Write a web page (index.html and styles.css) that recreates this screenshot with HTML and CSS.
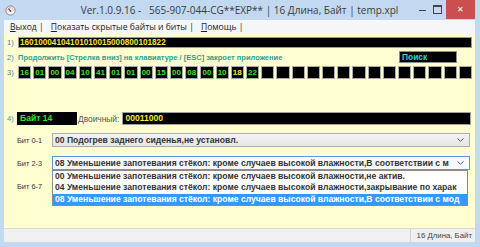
FILE: index.html
```html
<!DOCTYPE html>
<html lang="ru">
<head>
  <meta charset="UTF-8"/>
  <title>Ver.1.0.9.16 - 565-907-044-CG**EXP** | 16 Длина, Байт | temp.xpl</title>
  <link rel="stylesheet" href="styles.css">
</head>
<body>
  <div class="window">
    <div class="titlebar">
      <div class="app-icon">
        <svg width="11" height="11" viewBox="0 0 11 11">
          <circle cx="5.5" cy="5.5" r="4.6" fill="#f4f4f4" stroke="#8a8a8a" stroke-width="1"/>
          <path d="M2.6 5.5 A2.9 2.9 0 0 1 8.4 5.5" fill="none" stroke="#b0b0b0" stroke-width="0.8"/>
          <line x1="5.5" y1="6" x2="3.4" y2="3.4" stroke="#d33" stroke-width="1.2"/>
          <circle cx="5.5" cy="6" r="0.9" fill="#555"/>
        </svg>
      </div>
      <div class="title">Ver.1.0.9.16 -&nbsp;&nbsp;&nbsp;565-907-044-CG**EXP** | 16 Длина, Байт | temp.xpl</div>
      <div class="controls">
        <span class="btn-min"></span>
        <span class="btn-max"></span>
        <span class="btn-close">✕</span>
      </div>
    </div>

    <div class="menubar">
      <span class="menu-item"><u>В</u>ыход |</span>
      <span class="menu-item"><u>П</u>оказать скрытые байты и биты |</span>
      <span class="menu-item"><u>П</u>омощь |</span>
    </div>

    <div class="client">
      <!-- 1) строка байтов -->
      <div class="row row-hex">
        <span class="num">1)</span>
        <div class="hex-line">16010004104101010015000800101822</div>
      </div>

      <!-- 2) подсказка и поиск -->
      <div class="row row-hint">
        <span class="num">2)</span>
        <span class="hint">Продолжить [Стрелка вниз] на клавиатуре / [ESC] закроет приложение</span>
        <div class="search">Поиск</div>
      </div>

      <!-- 3) байты по ячейкам -->
      <div class="row row-bytes">
        <span class="num">3)</span>
        <div class="bytes">
          <span class="byte">16</span><span class="byte">01</span><span class="byte">00</span><span class="byte">04</span>
          <span class="byte">10</span><span class="byte">41</span><span class="byte">01</span><span class="byte">01</span>
          <span class="byte">00</span><span class="byte">15</span><span class="byte">00</span><span class="byte">08</span>
          <span class="byte">00</span><span class="byte">10</span><span class="byte active">18</span><span class="byte">22</span>
          <span class="byte"></span><span class="byte"></span><span class="byte"></span><span class="byte"></span>
          <span class="byte"></span><span class="byte"></span><span class="byte"></span><span class="byte"></span>
          <span class="byte"></span><span class="byte"></span><span class="byte"></span><span class="byte"></span>
          <span class="byte"></span><span class="byte"></span>
        </div>
      </div>

      <!-- 4) выбранный байт -->
      <div class="row row-byte">
        <span class="num num-teal">4)</span>
        <div class="byte-name">Байт 14</div>
        <span class="bin-label">Двоичный:</span>
        <div class="bin-value">00011000</div>
      </div>

      <div class="bit-row">
        <span class="bit-label">Бит 0-1</span>
        <div class="combo">
          <span class="combo-text">00 Подогрев заднего сиденья,не установл.</span>
          <svg class="chevron" width="7" height="4" viewBox="0 0 7 4"><path d="M0.5 0.5 L3.5 3.3 L6.5 0.5" fill="none" stroke="#555" stroke-width="1"/></svg>
        </div>
      </div>

      <div class="bit-row">
        <span class="bit-label">Бит 2-3</span>
        <div class="combo combo-open">
          <span class="combo-text">08 Уменьшение запотевания стёкол: кроме случаев высокой влажности,В соответствии с м</span>
          <svg class="chevron" width="7" height="4" viewBox="0 0 7 4"><path d="M0.5 0.5 L3.5 3.3 L6.5 0.5" fill="none" stroke="#555" stroke-width="1"/></svg>
          <ul class="dropdown">
            <li>00 Уменьшение запотевания стёкол: кроме случаев высокой влажности,не актив.</li>
            <li>04 Уменьшение запотевания стёкол: кроме случаев высокой влажности,закрывание по харак</li>
            <li class="selected">08 Уменьшение запотевания стёкол: кроме случаев высокой влажности,В соответствии с мод</li>
          </ul>
        </div>
      </div>

      <div class="bit-row">
        <span class="bit-label">Бит 6-7</span>
      </div>
    </div>

    <div class="statusbar">
      <span class="status-cell">16 Длина, Байт</span>
    </div>
  </div>
</body>
</html>
```

FILE: styles.css
```css
* { box-sizing: border-box; }
body { margin: 0; width: 480px; height: 247px; overflow: hidden; font-family: 'Liberation Sans', Arial, sans-serif; background-color: #c3d9f1; }

.window {
  height: 247px;
  display: flex;
  flex-direction: column;
  padding: 0 5px 5px 4px;
  background-color: #c3d9f1;
}

/* заголовок окна */
.titlebar {
  height: 20px;
  display: grid;
  grid-template-columns: 60px 1fr 60px;
  align-items: center;
}
.app-icon { display: flex; padding-left: 1px; padding-top: 1px; }
.title {
  text-align: center;
  font-family: 'Open Sans', sans-serif;
  font-size: 10px;
  color: #3a3a3a;
  white-space: nowrap;
}
.controls { display: flex; justify-content: flex-end; align-items: flex-start; height: 20px; }
.btn-min { width: 14px; height: 20px; position: relative; }
.btn-min::after { content: ''; position: absolute; left: 4px; top: 10px; width: 7px; height: 1px; background: #444; }
.btn-max { width: 16px; height: 20px; position: relative; margin-right: 1px; }
.btn-max::after { content: ''; position: absolute; left: 4px; top: 5px; width: 7px; height: 6px; border: 1px solid #444; border-top-width: 2px; }
.btn-close {
  width: 29px;
  height: 19px;
  background-color: #c9504e;
  color: #fff;
  font-size: 8px;
  text-align: center;
  line-height: 19px;
}

/* меню */
.menubar {
  height: 14px;
  background-color: #f5f6f7;
  display: flex;
  align-items: center;
  padding-left: 6px;
  font-family: 'Open Sans', sans-serif;
  font-size: 8.6px;
  color: #222;
  white-space: nowrap;
}
.menu-item { margin-right: 7px; }
.menu-item u { text-decoration-thickness: 1px; text-underline-offset: 1px; }

/* рабочая область */
.client {
  flex: 1;
  min-height: 0;
  background-color: #fefed1;
  padding: 3px 3px 0 3px;
  display: flex;
  flex-direction: column;
}
.row { display: flex; align-items: center; }
.num { width: 11px; flex-shrink: 0; font-size: 7.5px; color: #3b7fc4; }
.num-teal { color: #3a9a9e; }

.row-hex { height: 11px; }
.hex-line {
  flex: 1;
  height: 11px;
  background-color: #000;
  border: 1px solid #9c9c9c;
  color: #f3e24a;
  font-weight: bold;
  font-size: 8.2px;
  line-height: 9px;
  padding-left: 1px;
}

.row-hint { height: 12px; margin-top: 3px; }
.hint { color: #2f9e8e; font-weight: bold; font-size: 7.5px; white-space: nowrap; }
.search {
  margin-left: auto;
  margin-right: 15px;
  width: 58px;
  height: 12px;
  background-color: #000;
  border: 1px solid #8c8c8c;
  color: #3cd0d0;
  font-weight: bold;
  font-size: 8.4px;
  line-height: 10px;
  padding-left: 2px;
}

.row-bytes { height: 13px; margin-top: 3px; }
.bytes { flex: 1; display: flex; gap: 2px; height: 13px; }
.byte {
  flex: 1;
  background-color: #000;
  border: 1px solid #a9a9a9;
  color: #2ee62e;
  font-weight: bold;
  font-size: 8px;
  line-height: 11px;
  padding-left: 1px;
}
.byte.active { color: #f6ee3c; }

.row-byte { height: 13px; margin-top: 33px; }
.byte-name {
  width: 60px;
  height: 13px;
  margin-left: -1px;
  background-color: #000;
  color: #2ee62e;
  font-weight: bold;
  font-size: 8.6px;
  line-height: 13px;
  padding-left: 3px;
}
.bin-label { font-size: 8.4px; color: #555; padding: 0 3px 0 1px; white-space: nowrap; }
.bin-value {
  flex: 1;
  height: 13px;
  margin-right: 1px;
  background-color: #000;
  border: 1px solid #a0a0a0;
  color: #f3ea3c;
  font-weight: bold;
  font-size: 8.6px;
  line-height: 11px;
  padding-left: 2px;
}

/* биты */
.bit-row { display: flex; align-items: center; height: 14px; margin-top: 8px; }
.bit-row + .bit-row { margin-top: 9px; }
.bit-label { width: 45px; flex-shrink: 0; padding-left: 10px; font-size: 7.4px; color: #333; white-space: nowrap; }
.combo {
  flex: 1;
  min-width: 0;
  height: 14px;
  margin-right: 2px;
  position: relative;
  display: flex;
  align-items: center;
  border: 1px solid #acacac;
  background: linear-gradient(#f3f3f3, #e6e6e6);
  padding: 0 12px 0 2px;
}
.combo-text { min-width: 0; font-weight: bold; font-size: 8.6px; color: #333; white-space: nowrap; overflow: hidden; }
.chevron { position: absolute; right: 5px; top: 4px; }
.combo-open { border-color: #5b9bd5; background: #f7fbff; }

.dropdown {
  position: absolute;
  top: 13px;
  left: -1px;
  right: 1px;
  margin: 0;
  padding: 0;
  list-style: none;
  background-color: #fff;
  border: 1px solid #8a8a8a;
  z-index: 2;
}
.dropdown li {
  height: 11.3px;
  font-weight: bold;
  font-size: 8.6px;
  line-height: 11.3px;
  color: #333;
  padding-left: 2px;
  white-space: nowrap;
  overflow: hidden;
}
.dropdown li.selected { background-color: #3399ff; color: #fff; }

/* строка состояния */
.statusbar {
  height: 14px;
  background-color: #f0f0f0;
  border-top: 1px solid #dadada;
  display: flex;
  justify-content: flex-end;
}
.status-cell {
  border-left: 1px solid #d4d4d4;
  padding: 0 3px 0 6px;
  font-size: 7.8px;
  line-height: 13px;
  color: #444;
  white-space: nowrap;
}
```
